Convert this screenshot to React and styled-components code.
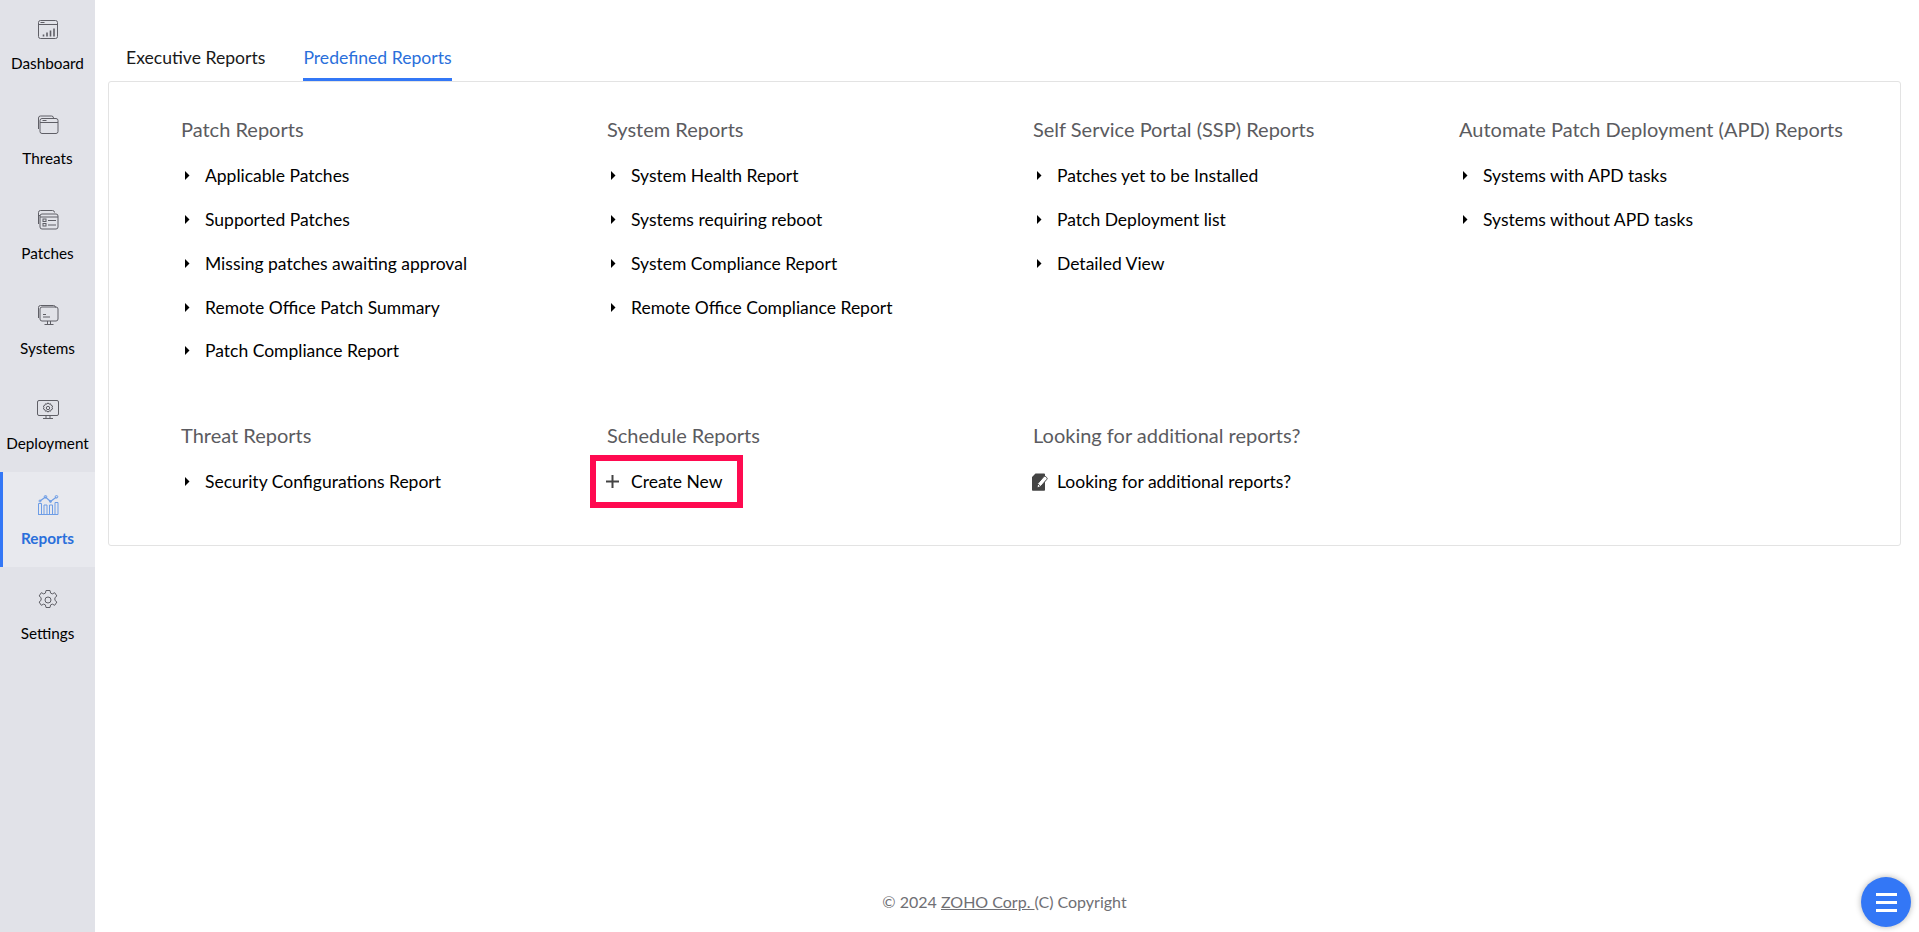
import styled, { createGlobalStyle } from 'styled-components'

const GlobalStyle = createGlobalStyle`
  html, body { margin: 0; padding: 0; background: #fff; }
  body { font-family: Lato, "Open Sans", sans-serif; color: #000; }
`

const Page = styled.div`
  display: flex;
  height: 932px;
  overflow: hidden;
`

const Sidebar = styled.nav`
  width: 95px;
  flex: none;
  background: #e1e2e8;
  display: flex;
  flex-direction: column;
`

const NavItem = styled.a`
  height: 95px;
  box-sizing: border-box;
  display: flex;
  flex-direction: column;
  align-items: center;
  padding-top: 22px;
  font-size: 15.3px;
  line-height: 20px;
  color: ${p => (p.$active ? '#2a6fdb' : '#000')};
  font-weight: ${p => (p.$active ? 700 : 400)};
  background: ${p => (p.$active ? '#e8e9ee' : 'transparent')};
  box-shadow: ${p => (p.$active ? 'inset 3px 0 0 #3377f6' : 'none')};
  svg { display: block; margin-bottom: 12px; }
  &:first-child { height: 92px; padding-top: 19px; }
`

const Main = styled.main`
  flex: 1;
  display: flex;
  flex-direction: column;
  padding: 0 18px 0 13px;
`

const Tabs = styled.div`
  display: flex;
  gap: 38px;
  padding: 40px 0 0 18px;
`

const Tab = styled.a`
  font-size: 17.6px;
  line-height: 20px;
  padding: 8px 0 10px;
  border-bottom: 3px solid ${p => (p.$active ? '#3377f6' : 'transparent')};
  color: ${p => (p.$active ? '#2a6fdb' : '#1a1a1a')};
`

const Card = styled.section`
  border: 1px solid #e3e3e3;
  border-radius: 3px;
  height: 465px;
  box-sizing: border-box;
  padding: 35px 0 0 72px;
  display: grid;
  grid-template-columns: repeat(4, 426px);
  grid-template-rows: 306px auto;
`

const Group = styled.div`
  display: flex;
  flex-direction: column;
`

const Heading = styled.h3`
  margin: 0 0 13px;
  font-size: 20px;
  line-height: 24px;
  font-weight: 400;
  color: #5b5b60;
  white-space: nowrap;
`

const Row = styled.a`
  position: relative;
  display: flex;
  align-items: center;
  height: 43.75px;
  font-size: 17.5px;
  white-space: nowrap;
  color: #000;
  ${p => p.$marked && `
    &::after {
      content: '';
      position: absolute;
      left: -17px;
      top: -5px;
      width: 153px;
      height: 53px;
      box-sizing: border-box;
      border: 6px solid #ff0a50;
    }
  `}
`

const Lead = styled.span`
  width: 24px;
  flex: none;
  display: flex;
  align-items: center;
  svg { display: block; margin-left: ${p => p.$shift}px; }
`

const Footer = styled.footer`
  margin-top: auto;
  height: 40px;
  text-align: center;
  font-size: 16px;
  line-height: 20px;
  color: #6f6f74;
  a { color: inherit; text-decoration: underline; }
`

const Fab = styled.button`
  position: fixed;
  left: 1861px;
  top: 877px;
  width: 50px;
  height: 50px;
  border: 0;
  padding: 0;
  border-radius: 50%;
  background: #3377f6;
  box-shadow: 0 0 6px rgba(0, 0, 0, 0.3);
  display: flex;
  flex-direction: column;
  align-items: center;
  justify-content: center;
  gap: 5px;
  span { display: block; width: 21px; height: 3px; background: #fff; }
`

const stroke = { fill: 'none', stroke: '#5f5f66', strokeWidth: 1 }

const DashboardIcon = () => (
  <svg width="22" height="22" viewBox="0 0 22 22" {...stroke}>
    <rect x="1.5" y="1.5" width="19" height="18" rx="2" />
    <path d="M1.5 5.5h19" />
    <path d="M3.5 3.5h4" />
    <path d="M6.5 17.5v-2M10 17.5v-4M13.5 17.5v-6M17 17.5v-8" strokeWidth="1.6" />
  </svg>
)

const ThreatsIcon = () => (
  <svg width="22" height="22" viewBox="0 0 22 22" {...stroke}>
    <path d="M1.5 15V4a2 2 0 0 1 2-2h11a2 2 0 0 1 2 2" />
    <rect x="3" y="4.500" width="18" height="15" rx="2" />
    <path d="M3 8.500h18" />
    <path d="M5.500 6.500h4" />
  </svg>
)

const PatchesIcon = () => (
  <svg width="22" height="22" viewBox="0 0 22 22" {...stroke}>
    <path d="M1.500 15V3.500a2 2 0 0 1 2-2h12a2 2 0 0 1 2 2" />
    <path d="M1.500 6.500h1.500" />
    <rect x="3" y="5" width="18" height="15" rx="2" />
    <path d="M3 8h18" />
    <rect x="6" y="10" width="3" height="2.500" />
    <rect x="6" y="14.500" width="3" height="2.500" />
    <path d="M11 11.500h8M11 16h8" />
  </svg>
)

const SystemsIcon = () => (
  <svg width="22" height="22" viewBox="0 0 22 22" {...stroke}>
    <path d="M1.500 14V3.500a2 2 0 0 1 2-2h13a2 2 0 0 1 2 2" />
    <rect x="3" y="3" width="18" height="14" rx="2" />
    <path d="M6 10.500h3M6 13h7" />
    <path d="M10.500 17v3M13.500 17v3M7.500 20.500h9" />
  </svg>
)

const DeploymentIcon = () => (
  <svg width="22" height="22" viewBox="0 0 22 22" {...stroke}>
    <rect x="0.5" y="1.500" width="21" height="15" rx="1.500" />
    <circle cx="11" cy="9" r="1.700" />
    <path d="M11 3.800l1 1.300 1.600-.3.500 1.500 1.500.7-.5 1.500.5 1.500-1.500.7-.5 1.500-1.600-.3-1 1.300-1-1.300-1.600.3-.5-1.500-1.500-.7.5-1.500-.5-1.500 1.500-.7.5-1.500 1.600.3z" />
    <path d="M9 16.500v3M13 16.500v3M6 19.500h10" />
  </svg>
)

const ReportsIcon = () => (
  <svg width="22" height="22" viewBox="0 0 22 22" fill="none" stroke="#6d9de6" strokeWidth="1">
    <path d="M1.500 20.500v-11h3v11M7 20.500v-9.500h3v9.500M12.500 20.500v-9.500h3v9.500M18 20.500v-12h3v12" />
    <path d="M1 20.500h20" />
    <path d="M3 7l5.500-4 5 4.500 6-4.500" strokeWidth="1.200" />
    <circle cx="8.500" cy="2.800" r="1.300" />
    <circle cx="13.500" cy="7.500" r="1" />
    <circle cx="19.500" cy="2.800" r="1.300" />
    <circle cx="3" cy="7" r="1" />
  </svg>
)

const SettingsIcon = () => (
  <svg width="22" height="22" viewBox="0 0 22 22" {...stroke}>
    <circle cx="11" cy="11" r="3" />
    <path d="M9 1.500h4l.6 2.600 1.700.8 2.400-1.200 2.200 3.300-2 1.700v2.600l2 1.700-2.200 3.300-2.400-1.200-1.700.8-.6 2.600H9l-.6-2.600-1.700-.8-2.400 1.200-2.200-3.300 2-1.700V8.700l-2-1.700 2.200-3.300 2.400 1.200 1.700-.8z" strokeLinejoin="round" />
  </svg>
)

const Caret = () => (
  <svg width="6" height="9" viewBox="0 0 6 9"><path d="M1 0l4.500 4.500L1 9z" fill="#000" /></svg>
)

const PlusIcon = () => (
  <svg width="15" height="15" viewBox="0 0 15 15"><path d="M7.500 1v13M1 7.500h13" stroke="#444" strokeWidth="2" /></svg>
)

const NoteIcon = () => (
  <svg width="17" height="18" viewBox="0 0 17 18">
    <path d="M4.500 0.500H13a1 1 0 0 1 1 1V17a.8.8 0 0 1-.8.800H1.800A.8.8 0 0 1 1 17V4z" fill="#444" />
    <path d="M6 15l.6-4.200 6-7a1.500 1.500 0 0 1 2.200-.1l.8.700a1.500 1.500 0 0 1 .1 2.100l-6 7z" fill="#fff" stroke="#444" strokeWidth="1" />
    <path d="M6.900 11l2.800 2.400" stroke="#444" strokeWidth=".9" />
  </svg>
)

const navItems = [
  { label: 'Dashboard', Icon: DashboardIcon },
  { label: 'Threats', Icon: ThreatsIcon },
  { label: 'Patches', Icon: PatchesIcon },
  { label: 'Systems', Icon: SystemsIcon },
  { label: 'Deployment', Icon: DeploymentIcon },
  { label: 'Reports', Icon: ReportsIcon, active: true },
  { label: 'Settings', Icon: SettingsIcon },
]

const groups = [
  { title: 'Patch Reports', items: ['Applicable Patches', 'Supported Patches', 'Missing patches awaiting approval', 'Remote Office Patch Summary', 'Patch Compliance Report'] },
  { title: 'System Reports', items: ['System Health Report', 'Systems requiring reboot', 'System Compliance Report', 'Remote Office Compliance Report'] },
  { title: 'Self Service Portal (SSP) Reports', items: ['Patches yet to be Installed', 'Patch Deployment list', 'Detailed View'] },
  { title: 'Automate Patch Deployment (APD) Reports', items: ['Systems with APD tasks', 'Systems without APD tasks'] },
  { title: 'Threat Reports', items: ['Security Configurations Report'] },
]

function ReportGroup({ title, items }) {
  return (
    <Group>
      <Heading>{title}</Heading>
      {items.map(item => (
        <Row key={item}><Lead $shift={3}><Caret /></Lead>{item}</Row>
      ))}
    </Group>
  )
}

export default function App() {
  return (
    <Page>
      <GlobalStyle />
      <Sidebar>
        {navItems.map(({ label, Icon, active }) => (
          <NavItem key={label} $active={active}><Icon />{label}</NavItem>
        ))}
      </Sidebar>
      <Main>
        <Tabs>
          <Tab>Executive Reports</Tab>
          <Tab $active>Predefined Reports</Tab>
        </Tabs>
        <Card>
          {groups.map(g => <ReportGroup key={g.title} {...g} />)}
          <Group>
            <Heading>Schedule Reports</Heading>
            <Row $marked><Lead $shift={-2}><PlusIcon /></Lead>Create New</Row>
          </Group>
          <Group>
            <Heading>Looking for additional reports?</Heading>
            <Row><Lead $shift={-2}><NoteIcon /></Lead>Looking for additional reports?</Row>
          </Group>
        </Card>
        <Footer>© 2024 <a>ZOHO Corp. </a>(C) Copyright</Footer>
      </Main>
      <Fab><span /><span /><span /></Fab>
    </Page>
  )
}
